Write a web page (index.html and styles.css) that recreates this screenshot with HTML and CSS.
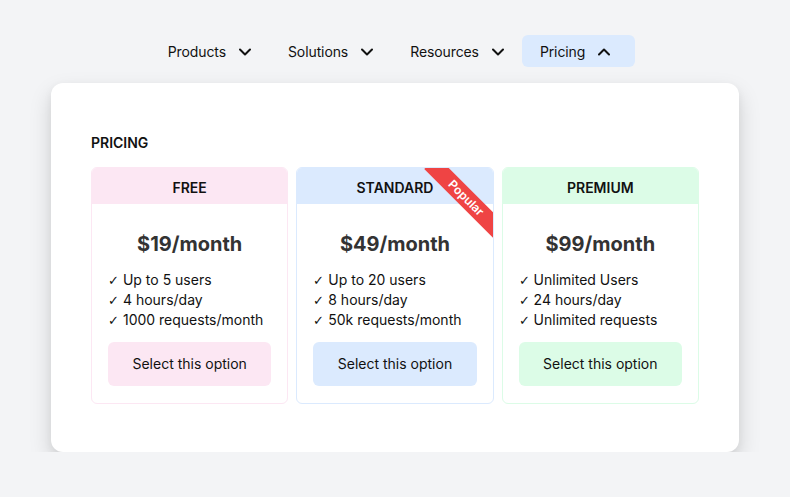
FILE: index.html
```html
<!DOCTYPE html>
<html>
<head>
<meta charset="utf-8">
<link rel="stylesheet" href="styles.css">
</head>
<body>
<nav class="nav">
  <div class="nav-item"><span>Products</span><svg class="chev" viewBox="0 0 12 8"><polyline points="1,1.5 6,6.5 11,1.5"/></svg></div>
  <div class="nav-item"><span>Solutions</span><svg class="chev" viewBox="0 0 12 8"><polyline points="1,1.5 6,6.5 11,1.5"/></svg></div>
  <div class="nav-item"><span>Resources</span><svg class="chev" viewBox="0 0 12 8"><polyline points="1,1.5 6,6.5 11,1.5"/></svg></div>
  <div class="nav-item active"><span>Pricing</span><svg class="chev" viewBox="0 0 12 8"><polyline points="1,6.5 6,1.5 11,6.5"/></svg></div>
</nav>
<section class="panel">
  <h2 class="label">PRICING</h2>
  <div class="plans">
    <div class="card free">
      <div class="card-head">FREE</div>
      <div class="card-body">
        <div class="price">$19/month</div>
        <ul class="features">
          <li><span class="tick">✓</span> Up to 5 users</li>
          <li><span class="tick">✓</span> 4 hours/day</li>
          <li><span class="tick">✓</span> 1000 requests/month</li>
        </ul>
        <div class="select">Select this option</div>
      </div>
    </div>
    <div class="card standard">
      <div class="card-head">STANDARD</div>
      <div class="ribbon">Popular</div>
      <div class="card-body">
        <div class="price">$49/month</div>
        <ul class="features">
          <li><span class="tick">✓</span> Up to 20 users</li>
          <li><span class="tick">✓</span> 8 hours/day</li>
          <li><span class="tick">✓</span> 50k requests/month</li>
        </ul>
        <div class="select">Select this option</div>
      </div>
    </div>
    <div class="card premium">
      <div class="card-head">PREMIUM</div>
      <div class="card-body">
        <div class="price">$99/month</div>
        <ul class="features">
          <li><span class="tick">✓</span> Unlimited Users</li>
          <li><span class="tick">✓</span> 24 hours/day</li>
          <li><span class="tick">✓</span> Unlimited requests</li>
        </ul>
        <div class="select">Select this option</div>
      </div>
    </div>
  </div>
</section>
</body>
</html>
```
FILE: styles.css
```css
* { box-sizing: border-box; }
html, body { margin: 0; padding: 0; }
body {
  background: #f3f4f6;
  font-family: Inter, "Noto Sans", sans-serif;
  color: #111827;
  font-size: 14px;
  line-height: 20px;
  padding-top: 35px;
}
.nav {
  display: flex;
  justify-content: center;
  height: 32px;
  padding-right: 6px;
}
.nav-item {
  display: flex;
  align-items: center;
  padding: 2px 18px 0 19px;
  border-radius: 6px;
  color: #111;
  font-size: 14px;
  letter-spacing: -0.1px;
}
.nav-item.active { background: #dbeafe; padding-left: 18px; padding-right: 25px; }
.chev {
  width: 12px;
  height: 8px;
  margin-left: 13px;
  fill: none;
  stroke: #111;
  stroke-width: 2;
  stroke-linecap: round;
  stroke-linejoin: round;
}
.panel {
  width: 688px;
  margin: 16px auto 0;
  background: #fff;
  border-radius: 12px;
  padding: 50px 40px 48px;
  box-shadow: 0 10px 22px rgba(0,0,0,0.15), 0 3px 8px rgba(0,0,0,0.05);
}
.label {
  margin: 0 0 14px;
  font-size: 14px;
  line-height: 20px;
  font-weight: 600;
  color: #111;
}
.plans {
  display: grid;
  grid-template-columns: repeat(3, 1fr);
  gap: 8px;
}
.card {
  position: relative;
  overflow: hidden;
  border: 1px solid;
  border-radius: 6px;
}
.card-head {
  padding: 10px 8px 6px;
  text-align: center;
  font-weight: 600;
  color: #111;
}
.card-body { padding: 24px 16px 17px; }
.price {
  text-align: center;
  font-size: 20px;
  line-height: 32px;
  font-weight: 700;
  color: #333;
  margin-bottom: 10px;
}
.features {
  list-style: none;
  margin: 0;
  padding: 0;
  color: #111;
}
.features li { height: 20px; line-height: 20px; }
.tick {
  font-family: "DejaVu Sans", sans-serif;
  font-size: 13px;
  line-height: 12px;
  font-weight: 300;
}
.select {
  margin-top: 12px;
  height: 44px;
  display: flex;
  align-items: center;
  justify-content: center;
  border-radius: 6px;
  color: #111;
}
.free { border-color: #fce7f3; }
.free .card-head, .free .select { background: #fce7f3; }
.standard { border-color: #dbeafe; }
.standard .card-head, .standard .select { background: #dbeafe; }
.premium { border-color: #dcfce7; }
.premium .card-head, .premium .select { background: #dcfce7; }
.ribbon {
  position: absolute;
  top: 21px;
  right: -23px;
  width: 100px;
  height: 18px;
  line-height: 18px;
  background: #ef4444;
  color: #fff;
  font-size: 12px;
  font-weight: 600;
  text-align: center;
  transform: rotate(45deg);
}
```
